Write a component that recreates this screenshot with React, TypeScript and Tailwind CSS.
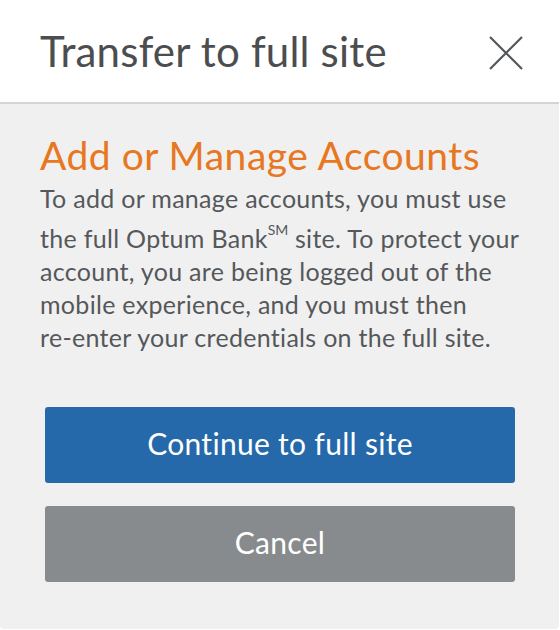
import React from 'react';

const CloseIcon = () => (
  <svg width="34" height="34" viewBox="0 0 34 34" fill="none" stroke="#54575a" strokeWidth="2.2">
    <path d="M1 1 L33 33 M33 1 L1 33" />
  </svg>
);

const App = () => {
  return (
    <div className="w-[560px] h-[630px] bg-white font-['Lato','Noto_Sans',sans-serif]">
      <div className="w-[559px] h-[629px] flex flex-col rounded-b-[4px] overflow-hidden">
        {/* Header */}
        <header className="h-[104px] shrink-0 bg-white border-b-2 border-[#d4d4d4] flex items-center justify-between pl-10 pr-[36px]">
          <h1 className="text-[42px] leading-none tracking-[0.2px] text-[#4b4d4f]">Transfer to full site</h1>
          <button aria-label="Close" className="mt-[4px]">
            <CloseIcon />
          </button>
        </header>

        {/* Body */}
        <section className="flex-1 bg-[#f0f0f0] pl-10 pr-6 pt-[29px]">
          <h2 className="text-[39px] leading-[44px] tracking-[0.5px] text-[#e87722]">Add or Manage Accounts</h2>
          <p className="text-[25px] leading-[33px] tracking-[0.3px] text-[#55585b] mt-[5px]">
            <span className="block">To add or manage accounts, you must use</span>
            <span className="block pt-[7px]">
              the full Optum Bank<sup className="text-[14px] tracking-normal align-[6px] leading-none">SM</sup> site. To protect your
            </span>
            <span className="block">account, you are being logged out of the</span>
            <span className="block">mobile experience, and you must then</span>
            <span className="block">re-enter your credentials on the full site.</span>
          </p>

          {/* Actions */}
          <div className="flex flex-col gap-[23px] mt-[53px] pl-[5px] pr-[20px]">
            <button className="h-[76px] pb-[4px] rounded-[3px] bg-[#2569aa] text-white text-[30px] tracking-[0.3px]">
              Continue to full site
            </button>
            <button className="h-[76px] pb-[4px] rounded-[3px] bg-[#888b8d] text-white text-[30px] tracking-[0.3px]">
              Cancel
            </button>
          </div>
        </section>
      </div>
    </div>
  );
};

export default App;
